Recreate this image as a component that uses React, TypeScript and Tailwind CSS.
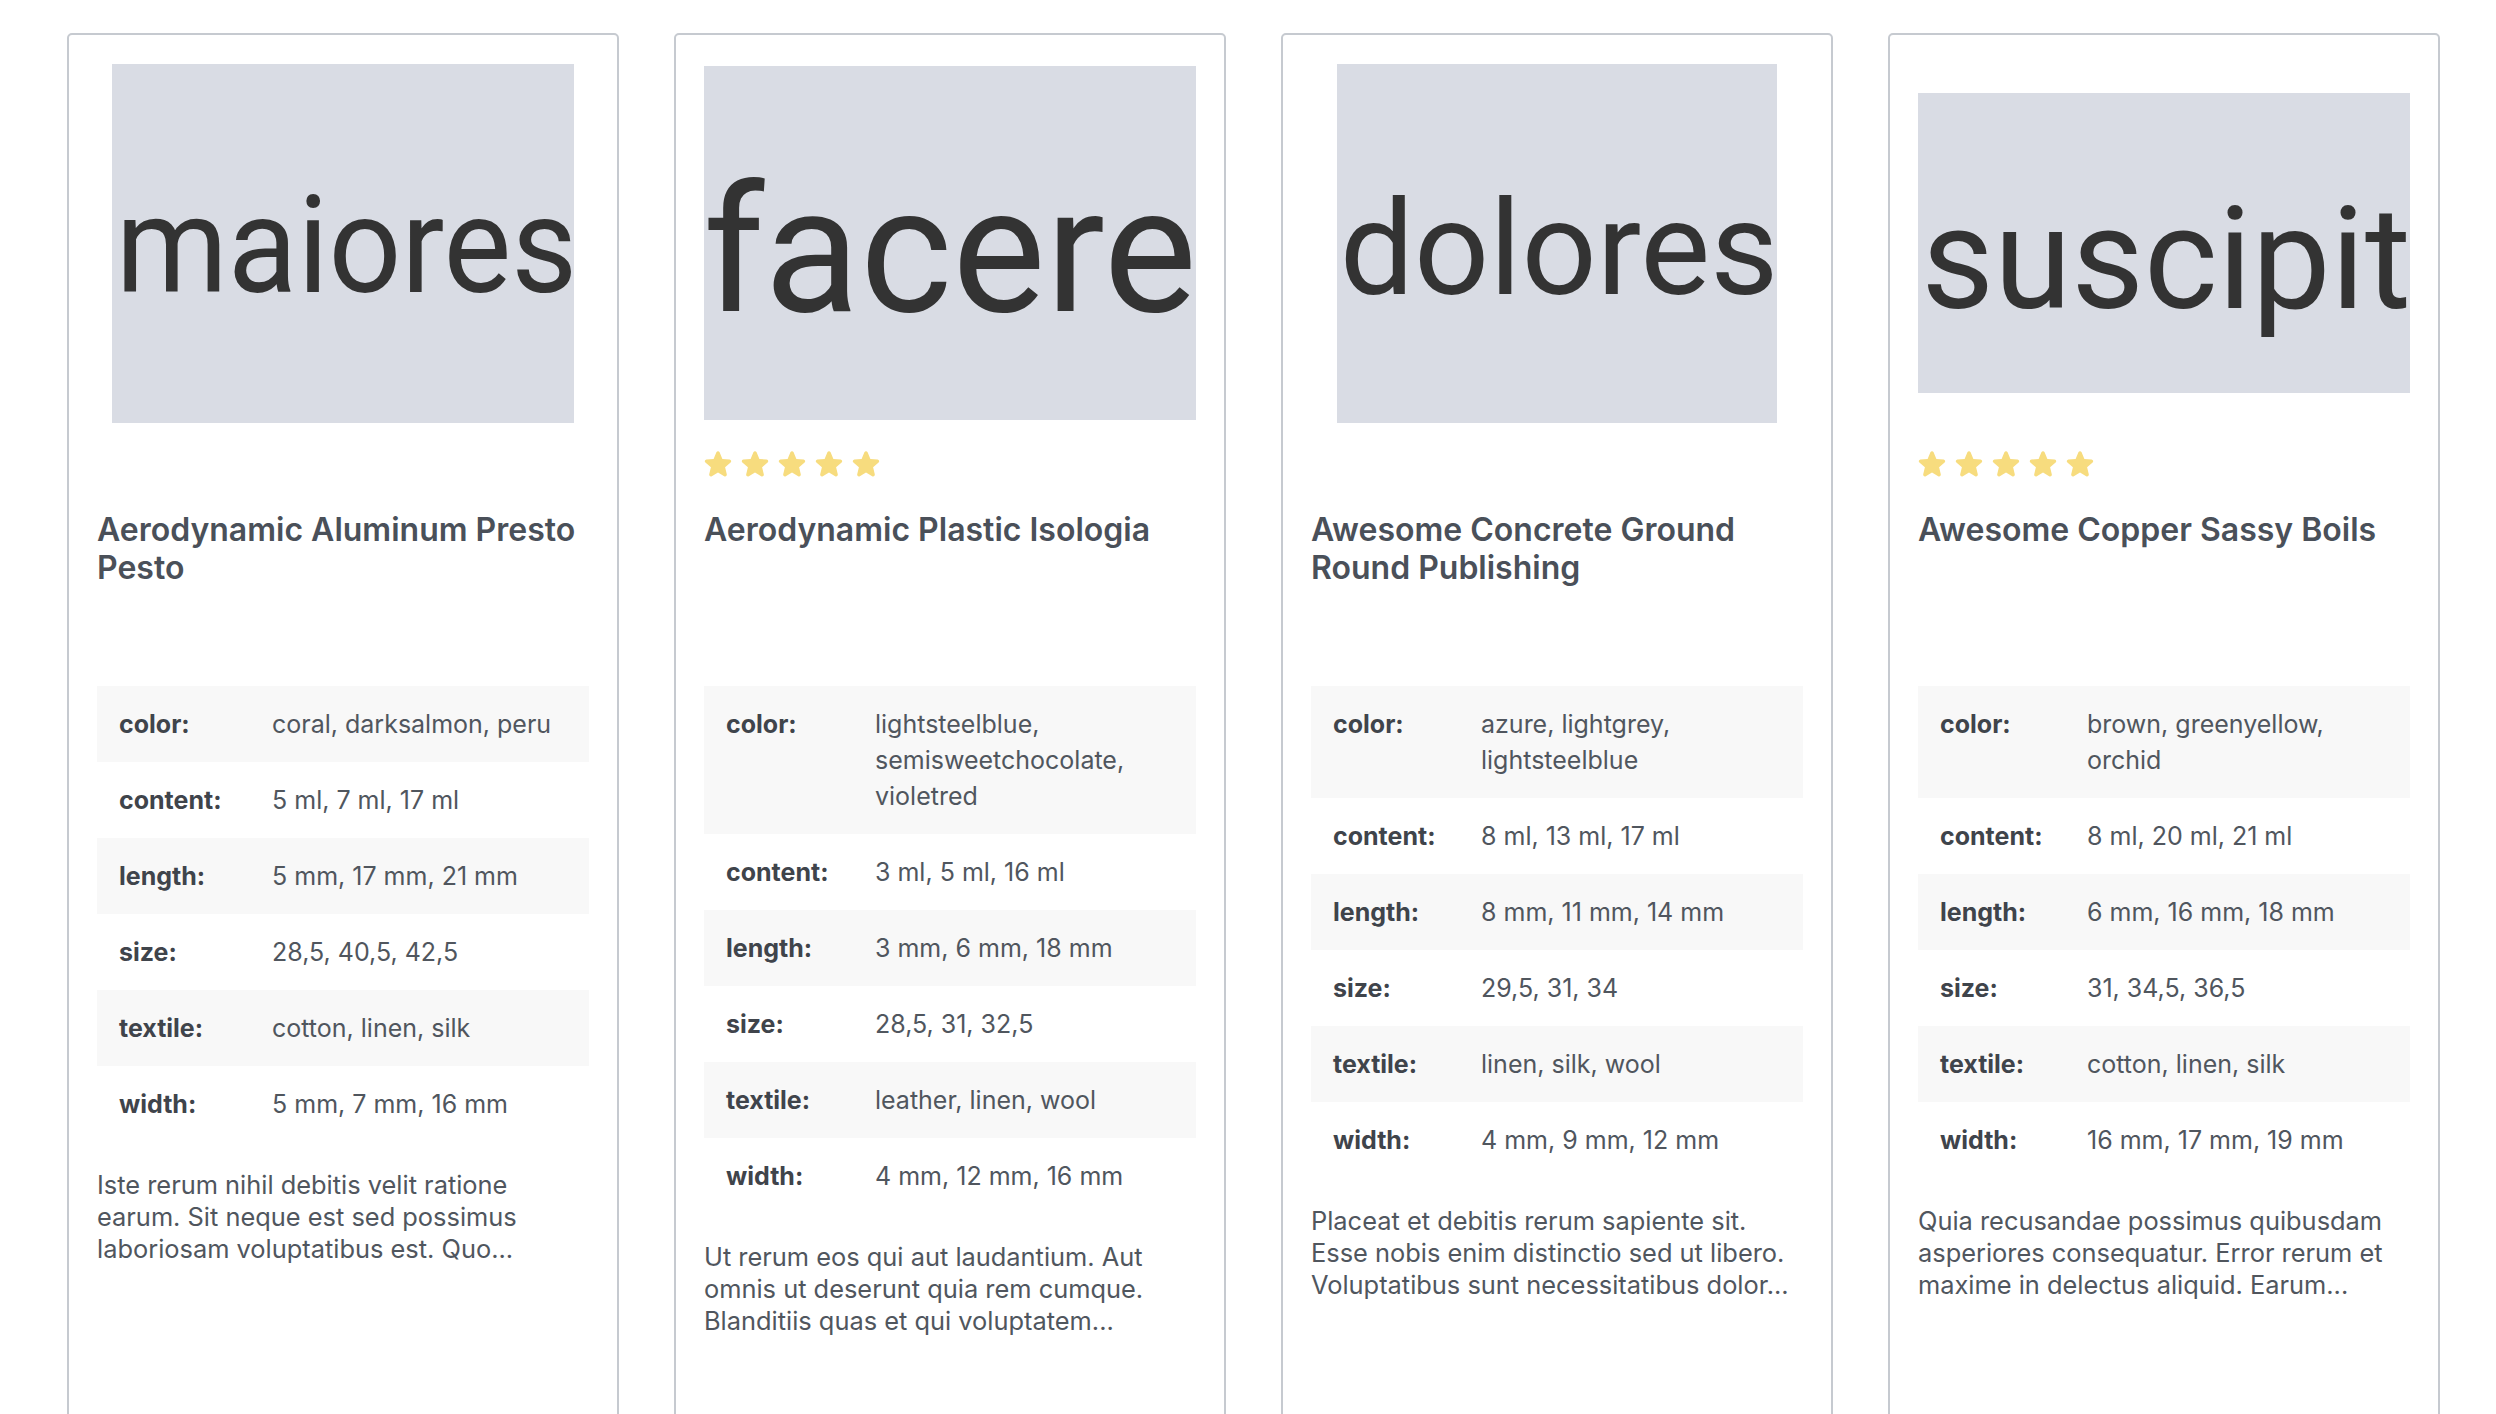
import React from "react";

type Product = {
  word: string;
  imgW: string;
  imgH: string;
  wordCls: string;
  wordTop: string;
  stars: boolean;
  title: string;
  labelW: string;
  specs: { label: string; lines: string[] }[];
  desc: string[];
};

const products: Product[] = [
  {
    word: "maiores",
    imgW: "w-[462px]",
    imgH: "h-[359px]",
    wordCls: "text-[136px] scale-x-[0.94] translate-x-[3px]",
    wordTop: "pt-[114px]",
    stars: false,
    title: "Aerodynamic Aluminum Presto Pesto",
    labelW: "w-[153px]",
    specs: [
      { label: "color:", lines: ["coral, darksalmon, peru"] },
      { label: "content:", lines: ["5 ml, 7 ml, 17 ml"] },
      { label: "length:", lines: ["5 mm, 17 mm, 21 mm"] },
      { label: "size:", lines: ["28,5, 40,5, 42,5"] },
      { label: "textile:", lines: ["cotton, linen, silk"] },
      { label: "width:", lines: ["5 mm, 7 mm, 16 mm"] },
    ],
    desc: [
      "Iste rerum nihil debitis velit ratione",
      "earum. Sit neque est sed possimus",
      "laboriosam voluptatibus est. Quo...",
    ],
  },
  {
    word: "facere",
    imgW: "w-[492px]",
    imgH: "h-[354px]",
    wordCls: "text-[176px]",
    wordTop: "pt-[97px]",
    stars: true,
    title: "Aerodynamic Plastic Isologia",
    labelW: "w-[149px]",
    specs: [
      {
        label: "color:",
        lines: ["lightsteelblue,", "semisweetchocolate,", "violetred"],
      },
      { label: "content:", lines: ["3 ml, 5 ml, 16 ml"] },
      { label: "length:", lines: ["3 mm, 6 mm, 18 mm"] },
      { label: "size:", lines: ["28,5, 31, 32,5"] },
      { label: "textile:", lines: ["leather, linen, wool"] },
      { label: "width:", lines: ["4 mm, 12 mm, 16 mm"] },
    ],
    desc: [
      "Ut rerum eos qui aut laudantium. Aut",
      "omnis ut deserunt quia rem cumque.",
      "Blanditiis quas et qui voluptatem...",
    ],
  },
  {
    word: "dolores",
    imgW: "w-[440px]",
    imgH: "h-[359px]",
    wordCls: "text-[132px] translate-x-[2px]",
    wordTop: "pt-[119px]",
    stars: false,
    title: "Awesome Concrete Ground Round Publishing",
    labelW: "w-[148px]",
    specs: [
      { label: "color:", lines: ["azure, lightgrey,", "lightsteelblue"] },
      { label: "content:", lines: ["8 ml, 13 ml, 17 ml"] },
      { label: "length:", lines: ["8 mm, 11 mm, 14 mm"] },
      { label: "size:", lines: ["29,5, 31, 34"] },
      { label: "textile:", lines: ["linen, silk, wool"] },
      { label: "width:", lines: ["4 mm, 9 mm, 12 mm"] },
    ],
    desc: [
      "Placeat et debitis rerum sapiente sit.",
      "Esse nobis enim distinctio sed ut libero.",
      "Voluptatibus sunt necessitatibus dolor...",
    ],
  },
  {
    word: "suscipit",
    imgW: "w-[492px]",
    imgH: "h-[300px]",
    wordCls: "text-[142px] scale-x-[0.99] translate-x-[2px]",
    wordTop: "pt-[96px]",
    stars: true,
    title: "Awesome Copper Sassy Boils",
    labelW: "w-[147px]",
    specs: [
      { label: "color:", lines: ["brown, greenyellow,", "orchid"] },
      { label: "content:", lines: ["8 ml, 20 ml, 21 ml"] },
      { label: "length:", lines: ["6 mm, 16 mm, 18 mm"] },
      { label: "size:", lines: ["31, 34,5, 36,5"] },
      { label: "textile:", lines: ["cotton, linen, silk"] },
      { label: "width:", lines: ["16 mm, 17 mm, 19 mm"] },
    ],
    desc: [
      "Quia recusandae possimus quibusdam",
      "asperiores consequatur. Error rerum et",
      "maxime in delectus aliquid. Earum...",
    ],
  },
];

const Star = () => (
  <svg viewBox="0 0 24 24" className="h-[32px] w-[32px]" fill="#f7dc7e">
    <path d="M10.788 3.21c.448-1.077 1.976-1.077 2.424 0l2.082 5.006 5.404.434c1.164.093 1.636 1.545.749 2.305l-4.117 3.527 1.257 5.273c.271 1.136-.964 2.033-1.96 1.425L12 18.354 7.373 21.18c-.996.608-2.231-.29-1.96-1.425l1.257-5.273-4.117-3.527c-.887-.76-.415-2.212.749-2.305l5.404-.434 2.082-5.005Z" />
  </svg>
);

const ProductCard = ({ p }: { p: Product }) => (
  <div className="flex h-[1500px] w-[552px] shrink-0 flex-col rounded-[5px] border-2 border-[#c6cad0] bg-white p-[28px]">
    <div className="flex h-[360px] items-center justify-center">
      <div
        className={`${p.imgW} ${p.imgH} ${p.wordTop} flex justify-center overflow-hidden bg-[#d9dce4]`}
      >
        <div
          className={`${p.wordCls} shrink-0 whitespace-nowrap font-['Roboto',sans-serif] leading-none text-[#333333]`}
        >
          {p.word}
        </div>
      </div>
    </div>

    <div className="-ml-[2px] mt-[25px] flex h-[32px] gap-[5px]">
      {p.stars && [0, 1, 2, 3, 4].map((i) => <Star key={i} />)}
    </div>

    <h2 className="mt-[31px] h-[175px] text-[32px] font-semibold leading-[38.4px] text-[#4a5059]">
      {p.title}
    </h2>

    <div className="text-[25px] leading-[36px]">
      {p.specs.map((s, i) => (
        <div
          key={s.label}
          className={`flex px-[22px] py-[20px] ${i % 2 === 0 ? "bg-[#f8f8f8]" : "bg-white"}`}
        >
          <div className={`${p.labelW} shrink-0 font-bold text-[#3f444b]`}>
            {s.label}
          </div>
          <div className="text-[#50565e]">
            {s.lines.map((l) => (
              <div key={l}>{l}</div>
            ))}
          </div>
        </div>
      ))}
    </div>

    <div className="mt-[27px] text-[25.4px] leading-[32px] text-[#50565e]">
      {p.desc.map((l) => (
        <div key={l} className="whitespace-nowrap">
          {l}
        </div>
      ))}
    </div>
  </div>
);

export default function App() {
  return (
    <div className="h-[1414px] overflow-hidden bg-white font-['Inter',sans-serif]">
      <div className="flex gap-[55px] pl-[67px] pt-[33px]">
        {products.map((p) => (
          <ProductCard key={p.word} p={p} />
        ))}
      </div>
    </div>
  );
}
